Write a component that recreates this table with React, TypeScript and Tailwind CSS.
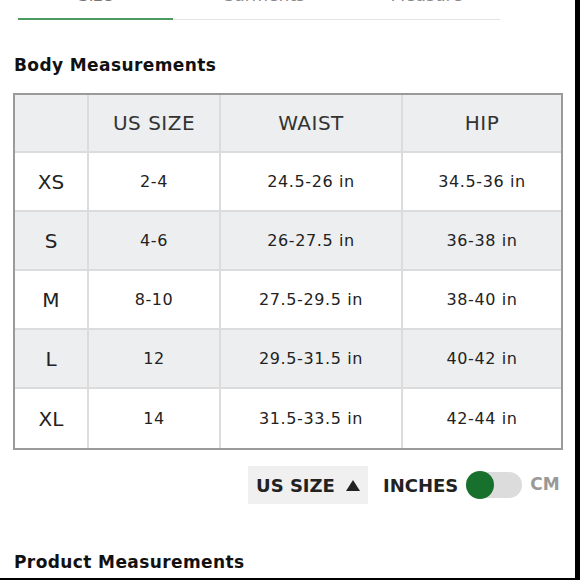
import React, { useState } from 'react';

const rows = [
  { size: 'XS', us: '2-4', waist: '24.5-26 in', hip: '34.5-36 in' },
  { size: 'S', us: '4-6', waist: '26-27.5 in', hip: '36-38 in' },
  { size: 'M', us: '8-10', waist: '27.5-29.5 in', hip: '38-40 in' },
  { size: 'L', us: '12', waist: '29.5-31.5 in', hip: '40-42 in' },
  { size: 'XL', us: '14', waist: '31.5-33.5 in', hip: '42-44 in' },
];

const headers = ['', 'US SIZE', 'WAIST', 'HIP'];

function App() {
  const [inches, setInches] = useState(true);

  return (
    <div className="w-[580px] h-[580px] overflow-hidden bg-white border-r-[5px] border-b-2 border-black text-[#222]" style={{ fontFamily: '"DejaVu Sans", "Noto Sans", sans-serif' }}>
      {/* Tabs, scrolled mostly out of view */}
      <div className="mx-[18px] w-[482px] h-[20px] flex items-end">
        <div className="w-[155px] h-[20px] flex flex-col justify-between overflow-hidden">
          <span className="text-[17px] leading-[18px] -mt-[14px] text-center text-[#777]">Size</span>
          <div className="h-[2px] bg-[#4a9a62]" />
        </div>
        <div className="flex-1 h-[20px] flex flex-col justify-between overflow-hidden">
          <div className="flex -mt-[14px] text-[17px] leading-[18px] text-[#888]">
            <span className="w-[180px] text-center">Garments</span>
            <span className="flex-1 text-center">Measure</span>
          </div>
          <div className="h-px bg-[#e4e4e4]" />
        </div>
      </div>

      <h2 className="mt-[35px] ml-[14px] text-[17px] leading-[20px] tracking-[0.4px] font-bold text-[#111]">Body Measurements</h2>

      <div className="mt-[18px] ml-[13px] w-[550px] border-2 border-[#9a9a9a]">
        <div className="grid grid-cols-[74px_132px_182px_1fr]">
          {headers.map((h, i) => (
            <div
              key={i}
              className={`h-[58px] flex items-center justify-center bg-[#eceef0] text-[20px] tracking-[0.5px] text-[#333] border-b-2 border-[#dcdcdc] ${i < 3 ? 'border-r-2' : ''}`}
            >
              {h}
            </div>
          ))}
          {rows.map((r, ri) => {
            const bg = ri % 2 === 1 ? 'bg-[#eceef0]' : 'bg-white';
            const bottom = ri < rows.length - 1 ? 'border-b-2' : '';
            const cells = [r.size, r.us, r.waist, r.hip];
            return cells.map((c, ci) => (
              <div
                key={`${ri}-${ci}`}
                className={`h-[59px] flex items-center justify-center ${bg} border-[#dcdcdc] ${bottom} ${ci < 3 ? 'border-r-2' : ''} ${ci === 0 ? 'text-[20px]' : 'text-[16px] tracking-[0.6px]'} text-[#222]`}
              >
                {c}
              </div>
            ));
          })}
        </div>
      </div>

      <div className="mt-[16px] ml-[248px] flex items-center">
        <button className="w-[120px] h-[38px] bg-[#f0f0f0] flex items-center justify-center gap-[11px] text-[18px] font-bold text-[#222]">
          US SIZE
          <svg width="14" height="11" viewBox="0 0 14 11"><path d="M7 0 L14 11 L0 11 Z" fill="#222" /></svg>
        </button>
        <span className="ml-[15px] text-[18px] font-bold text-[#222]">INCHES</span>
        <button
          onClick={() => setInches(!inches)}
          className="ml-[9px] relative w-[55px] h-[26px] rounded-full bg-[#dcdcdc]"
        >
          <span className={`absolute top-[-1px] ${inches ? 'left-[-1px]' : 'right-[-1px]'} w-[28px] h-[28px] rounded-full bg-[#17702c]`} />
        </button>
        <span className="ml-[8px] text-[17px] font-bold text-[#999]">CM</span>
      </div>

      <h2 className="mt-[48px] ml-[14px] text-[17px] leading-[20px] tracking-[0.4px] font-bold text-[#111]">Product Measurements</h2>
    </div>
  );
}

export default App;
